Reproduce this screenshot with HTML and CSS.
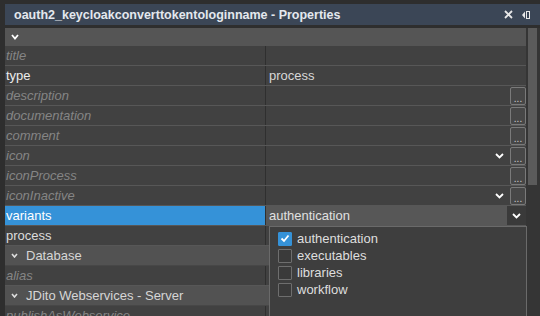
FILE: index.html
```html
<!DOCTYPE html>
<html lang="en">
<head>
    <meta charset="UTF-8">
    <title>Properties</title>
    <link rel="stylesheet" href="styles.css">
</head>
<body>
    <div class="window">
        <div class="titlebar">
            <span class="title">oauth2_keycloakconverttokentologinname - Properties</span>
            <span class="title-icons">
                <svg width="9" height="9" viewBox="0 0 9 9"><path d="M1 1 L8 8 M8 1 L1 8" stroke="#e8e8e8" stroke-width="1.8"/></svg>
                <svg width="8" height="8" viewBox="0 0 8 8"><path d="M3 0.5 L0 4 L3 7.5 Z" fill="#e8e8e8"/><rect x="4.5" y="0.5" width="3" height="7" fill="none" stroke="#e8e8e8" stroke-width="1"/></svg>
            </span>
        </div>
        <div class="main">
            <div class="sheet">
                <div class="head-row">
                    <svg class="chev" width="8" height="6" viewBox="0 0 8 6"><path d="M1 1 L4 4.5 L7 1" fill="none" stroke="#fff" stroke-width="1.8"/></svg>
                </div>

                <div class="row"><div class="key unset">title</div><div class="val"></div></div>
                <div class="row"><div class="key set">type</div><div class="val text">process</div></div>
                <div class="row"><div class="key unset">description</div><div class="val"><span class="more">...</span></div></div>
                <div class="row"><div class="key unset">documentation</div><div class="val"><span class="more">...</span></div></div>
                <div class="row"><div class="key unset">comment</div><div class="val"><span class="more">...</span></div></div>
                <div class="row"><div class="key unset">icon</div><div class="val"><svg class="dd" width="9" height="6" viewBox="0 0 9 6"><path d="M1 1 L4.5 4.5 L8 1" fill="none" stroke="#fff" stroke-width="1.8"/></svg><span class="more">...</span></div></div>
                <div class="row"><div class="key unset">iconProcess</div><div class="val"><span class="more">...</span></div></div>
                <div class="row"><div class="key unset">iconInactive</div><div class="val"><svg class="dd" width="9" height="6" viewBox="0 0 9 6"><path d="M1 1 L4.5 4.5 L8 1" fill="none" stroke="#fff" stroke-width="1.8"/></svg><span class="more">...</span></div></div>
                <div class="row selected">
                    <div class="key">variants</div>
                    <div class="val editing">authentication<span class="dd-btn"><svg width="9" height="6" viewBox="0 0 9 6"><path d="M1 1 L4.5 4.5 L8 1" fill="none" stroke="#fff" stroke-width="1.8"/></svg></span></div>
                </div>
                <div class="row"><div class="key">process</div><div class="val"></div></div>
                <div class="cat-row"><svg class="chev" width="7" height="5" viewBox="0 0 7 5"><path d="M1 1 L3.5 4 L6 1" fill="none" stroke="#ddd" stroke-width="1.6"/></svg>Database</div>
                <div class="row"><div class="key unset">alias</div><div class="val"></div></div>
                <div class="cat-row"><svg class="chev" width="7" height="5" viewBox="0 0 7 5"><path d="M1 1 L3.5 4 L6 1" fill="none" stroke="#ddd" stroke-width="1.6"/></svg>JDito Webservices - Server</div>
                <div class="row"><div class="key unset">publishAsWebservice</div><div class="val"></div></div>

                <div class="popup">
                    <label class="opt"><span class="box checked"><svg width="10" height="9" viewBox="0 0 10 9"><path d="M1.5 4.5 L4 7 L8.5 1.5" fill="none" stroke="#fff" stroke-width="1.8"/></svg></span>authentication</label>
                    <label class="opt"><span class="box"></span>executables</label>
                    <label class="opt"><span class="box"></span>libraries</label>
                    <label class="opt"><span class="box"></span>workflow</label>
                </div>
            </div>
            <div class="scrollbar"><div class="thumb"></div></div>
        </div>
    </div>
</body>
</html>
```

FILE: styles.css
```css
body {
    margin: 0;
    background: #2e2e2e;
    font-family: "Liberation Sans", Arial, sans-serif;
    font-size: 13px;
    color: #dcdcdc;
    width: 540px;
    height: 316px;
    overflow: hidden;
}

.window {
    padding-top: 4px;
    padding-left: 5px;
}

.titlebar {
    height: 21px;
    background: #3b4656;
    display: flex;
    align-items: center;
    justify-content: space-between;
    padding: 0 10px 0 9px;
    margin-bottom: 3px;
}
.title {
    font-weight: bold;
    font-size: 12.5px;
    color: #e4e8ee;
}
.title-icons {
    display: flex;
    gap: 9px;
    align-items: center;
}

.main {
    display: flex;
}
.sheet {
    width: 521px;
    position: relative;
    background: #404040;
}

.head-row {
    height: 18px;
    background: #555555;
    display: flex;
    align-items: center;
    padding-left: 6px;
}

.row {
    height: 20px;
    box-sizing: border-box;
    border-bottom: 1px solid #575757;
    display: grid;
    grid-template-columns: 261px 1fr;
    background: #414141;
}
.key {
    padding-left: 1px;
    line-height: 19px;
    border-right: 1px solid #2f2f2f;
    white-space: nowrap;
    overflow: hidden;
}
.key.unset {
    font-style: italic;
    color: #858585;
}
.key.set {
    color: #ececec;
}
.val {
    line-height: 19px;
    padding-left: 3px;
    display: flex;
    align-items: center;
    justify-content: flex-end;
    gap: 6px;
}
.val.text {
    justify-content: flex-start;
    color: #d8d8d8;
}

.more {
    width: 14px;
    height: 16px;
    border: 1px solid #7a7a7a;
    border-radius: 2px;
    background: #474747;
    color: #d0d0d0;
    font-size: 10px;
    line-height: 1;
    display: flex;
    align-items: flex-end;
    justify-content: center;
}

.selected .key {
    background: #3592d8;
    color: #fff;
}
.val.editing {
    background: #575757;
    justify-content: space-between;
    padding-right: 0;
    color: #e0e0e0;
}
.dd-btn {
    width: 19px;
    height: 19px;
    background: #3a3a3a;
    display: flex;
    align-items: center;
    justify-content: center;
}

.cat-row {
    height: 20px;
    box-sizing: border-box;
    background: #525252;
    border-bottom: 1px solid #474747;
    display: flex;
    align-items: center;
    gap: 8px;
    padding-left: 6px;
    color: #d6d6d6;
}

.popup {
    position: absolute;
    left: 264px;
    top: 198px;
    width: 258px;
    height: 100px;
    box-sizing: border-box;
    border: 1px solid #6a6a6a;
    background: #3e3e3e;
    padding: 3px 0 0 8px;
    display: flex;
    flex-direction: column;
}
.opt {
    height: 17px;
    display: flex;
    align-items: center;
    gap: 5px;
    color: #dedede;
}
.box {
    width: 12px;
    height: 12px;
    border: 1px solid #6e6e6e;
    border-radius: 1px;
    background: #3a3a3a;
    display: flex;
    align-items: center;
    justify-content: center;
}
.box.checked {
    background: #3592d8;
    border-color: #3592d8;
}

.scrollbar {
    width: 14px;
    height: 300px;
    background: #353535;
    padding-left: 2px;
    box-sizing: border-box;
}
.thumb {
    width: 9px;
    height: 157px;
    background: #5b5b5b;
}
```
